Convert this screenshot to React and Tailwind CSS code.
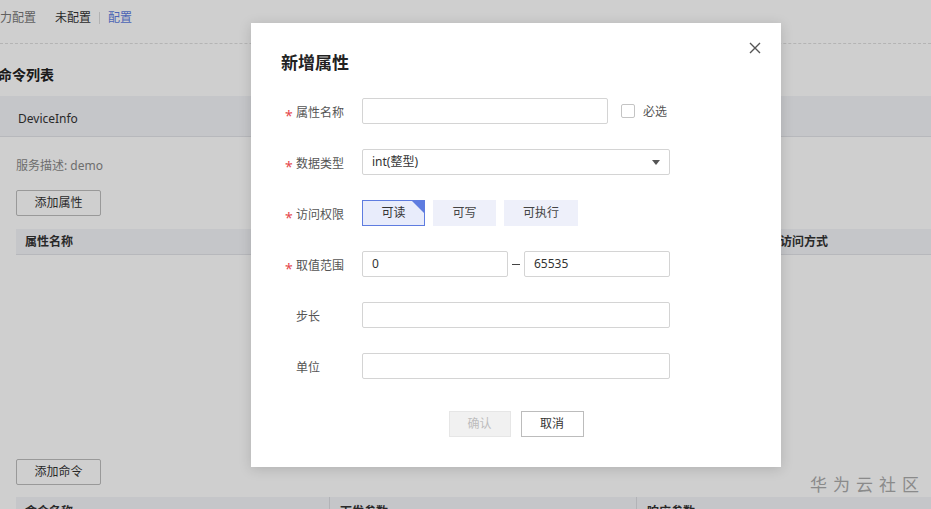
import React from "react";

const font = { fontFamily: '"Noto Sans", "Noto Sans CJK SC", sans-serif' };

function Label({ text, required }) {
  return (
    <div className="w-[81px] shrink-0 flex items-center pt-[4px] text-[12px] text-[#555]">
      <span className={`w-[15px] pl-[4px] text-[#e5484d] text-[14px] leading-none translate-y-[3px] ${required ? "" : "invisible"}`}>*</span>
      <span>{text}</span>
    </div>
  );
}

function Input({ className = "", value = "" }) {
  return (
    <div className={`h-[26px] border border-[#d4d4d4] rounded-[2px] bg-white flex items-center px-[9px] text-[12px] text-[#333] ${className}`}>
      {value}
    </div>
  );
}

function Row({ children }) {
  return <div className="flex items-center h-[26px]">{children}</div>;
}

function Modal() {
  return (
    <div className="absolute left-[251px] top-[23px] w-[530px] bg-white shadow-[0_2px_12px_rgba(0,0,0,0.15)] px-[30px] pt-[30px] pb-[30px]">
      <button className="absolute right-[20px] top-[19px] w-[12px] h-[12px] text-[#555]">
        <svg viewBox="0 0 12 12" width="12" height="12" fill="none" stroke="currentColor" strokeWidth="1.4">
          <path d="M1 1 L11 11 M11 1 L1 11" />
        </svg>
      </button>
      <div className="text-[17px] leading-[20px] font-bold text-[#222]">新增属性</div>
      <div className="mt-[25px] flex flex-col gap-[25px]">
        <Row>
          <Label text="属性名称" required />
          <Input className="w-[246px]" />
          <div className="ml-[13px] w-[14px] h-[14px] border border-[#c4c4c4] rounded-[2px]" />
          <span className="ml-[8px] pt-[2px] text-[12px] text-[#555]">必选</span>
        </Row>
        <Row>
          <Label text="数据类型" required />
          <div className="w-[308px] h-[26px] border border-[#d4d4d4] rounded-[2px] flex items-center justify-between pl-[9px] pr-[9px] text-[12px] text-[#333]">
            <span>int(整型)</span>
            <svg width="8" height="5" viewBox="0 0 8 5">
              <path d="M0 0 H8 L4 5 Z" fill="#555" />
            </svg>
          </div>
        </Row>
        <Row>
          <Label text="访问权限" required />
          <div className="flex gap-[8px]">
            <div className="relative w-[63px] h-[26px] border border-[#5e7ce0] bg-[#e8ecfb] flex items-center justify-center text-[12px] text-[#333] overflow-hidden">
              可读
              <svg className="absolute right-0 top-0" width="12" height="12" viewBox="0 0 12 12">
                <path d="M0 0 H12 V12 Z" fill="#5e7ce0" />
              </svg>
            </div>
            <div className="w-[63px] h-[26px] bg-[#eef0fa] flex items-center justify-center text-[12px] text-[#444]">可写</div>
            <div className="w-[74px] h-[26px] bg-[#eef0fa] flex items-center justify-center text-[12px] text-[#444]">可执行</div>
          </div>
        </Row>
        <Row>
          <Label text="取值范围" required />
          <Input className="w-[146px]" value="0" />
          <div className="w-[16px] flex justify-center">
            <div className="w-[8px] h-[1px] bg-[#444]" />
          </div>
          <Input className="w-[146px]" value="65535" />
        </Row>
        <Row>
          <Label text="步长" />
          <Input className="w-[308px]" />
        </Row>
        <Row>
          <Label text="单位" />
          <Input className="w-[308px]" />
        </Row>
      </div>
      <div className="mt-[32px] flex justify-center gap-[10px]">
        <div className="w-[62px] h-[26px] bg-[#f1f1f1] border border-[#e6e6e6] flex items-center justify-center text-[12px] text-[#bdbdbd]">确认</div>
        <div className="w-[63px] h-[26px] bg-white border border-[#bcbcbc] flex items-center justify-center text-[12px] text-[#333]">取消</div>
      </div>
    </div>
  );
}

function Page() {
  return (
    <div className="bg-white h-full">
      <div className="h-[36px] flex items-center text-[12px]">
        <span className="text-[#777]">力配置</span>
        <span className="ml-[19px] text-[#333]">未配置</span>
        <span className="ml-[8px] w-px h-[12px] bg-[#dcdcdc]" />
        <span className="ml-[8px] text-[#5e7ce0]">配置</span>
      </div>
      <div className="mt-[7px] border-t border-dashed border-[#dedede]" />
      <div className="mt-[21px] ml-[-2px] text-[14px] leading-[20px] font-bold text-[#222]">命令列表</div>
      <div className="mt-[11px] h-[41px] bg-[#f3f4f8] border-b border-[#e2e3e8] flex items-center pt-[6px] pl-[18px] text-[12px] text-[#333]">
        DeviceInfo
      </div>
      <div className="pl-[16px]">
        <div className="mt-[21px] text-[12px] leading-[16px] text-[#888]">服务描述: demo</div>
        <div className="mt-[16px] w-[85px] h-[26px] border border-[#bdbdbd] rounded-[2px] flex items-center justify-center text-[12px] text-[#333]">添加属性</div>
        <div className="mt-[13px] h-[26px] bg-[#f3f4f8] border-b border-[#e2e3e8] flex items-center text-[12px] font-semibold text-[#333]">
          <span className="pl-[9px] w-[764px]">属性名称</span>
          <span>访问方式</span>
        </div>
        <div className="h-[204px]" />
        <div className="w-[85px] h-[26px] border border-[#bdbdbd] rounded-[2px] flex items-center justify-center text-[12px] text-[#333]">添加命令</div>
        <div className="mt-[12px] h-[30px] bg-[#f3f4f8] flex items-center text-[12px] font-semibold text-[#333]">
          <span className="pl-[9px] w-[314px] border-r border-[#dcdde2] h-full flex items-center">命令名称</span>
          <span className="pl-[10px] w-[307px] border-r border-[#dcdde2] h-full flex items-center">下发参数</span>
          <span className="pl-[10px] h-full flex items-center">响应参数</span>
        </div>
      </div>
    </div>
  );
}

export default function App() {
  return (
    <div className="relative w-[931px] h-[509px] overflow-hidden" style={font}>
      <Page />
      <div className="absolute inset-0 bg-black/[0.19]" />
      <Modal />
      <div className="absolute left-[810px] top-[472px] text-[17px] tracking-[6px] text-[#8a8a8a] whitespace-nowrap">华为云社区</div>
    </div>
  );
}
